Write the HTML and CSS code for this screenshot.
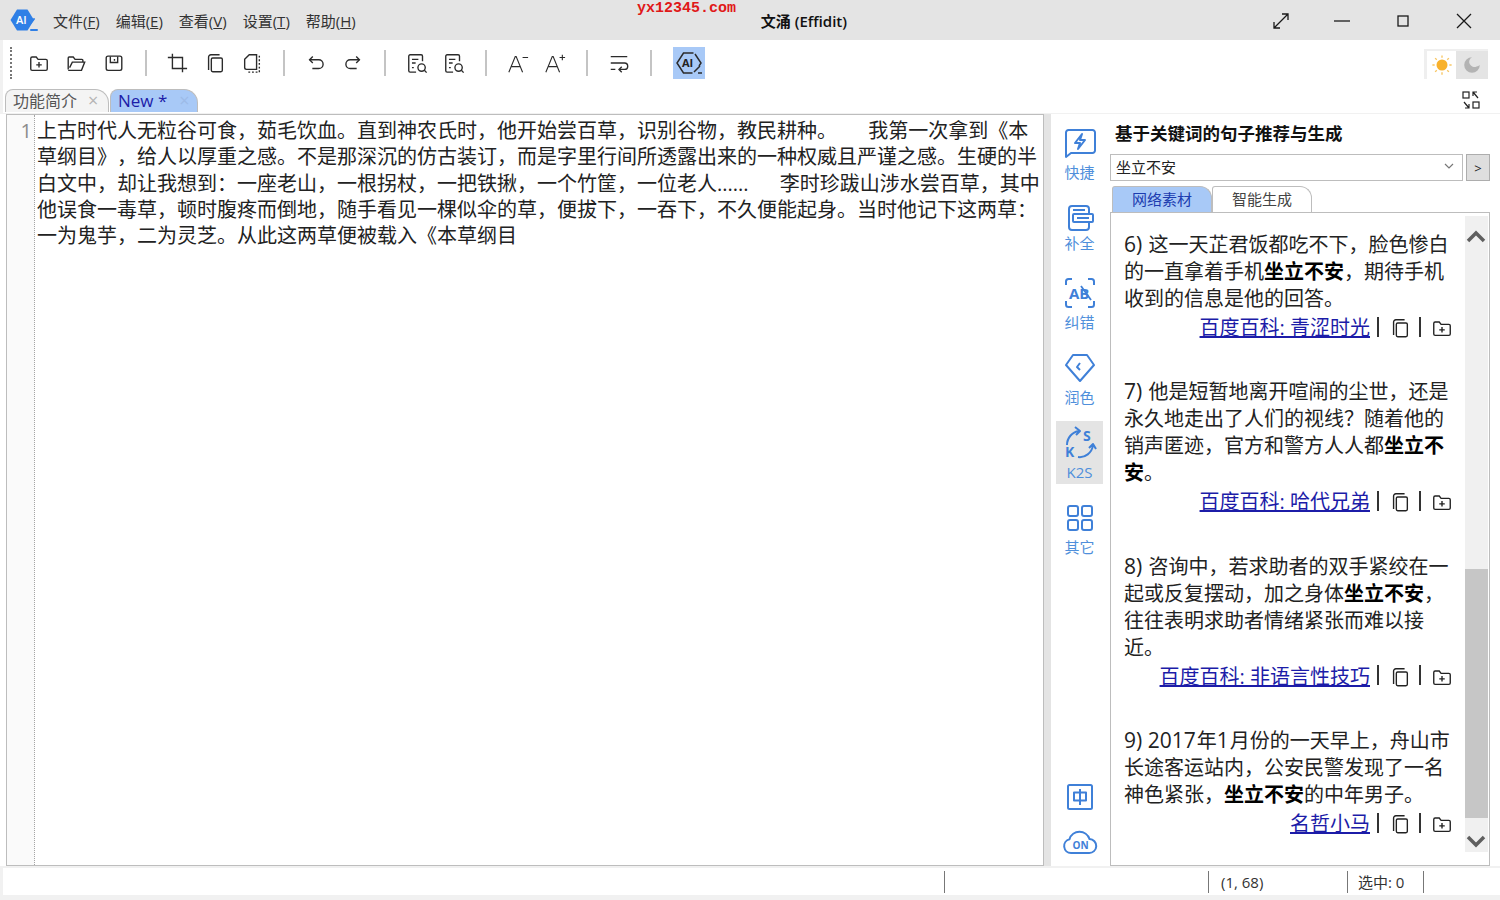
FILE: index.html
```html
<!DOCTYPE html>
<html lang="zh-CN">
<head>
  <meta charset="UTF-8">
  <title>文涌 (Effidit)</title>
  <link rel="stylesheet" href="styles.css">
</head>
<body>
  <svg class="defs" width="0" height="0">
    <symbol id="i-copy" viewBox="0 0 24 24"><path d="M5 19.5V5.5A2.5 2.5 0 0 1 7.500 3H17"/><rect x="8" y="6.500" width="12" height="15" rx="1.500"/></symbol>
    <symbol id="i-folder" viewBox="0 0 24 24"><path d="M3 7a1.500 1.500 0 0 1 1.500-1.500H9l2 2.500h8.500A1.500 1.500 0 0 1 21 9.500v9a1.500 1.500 0 0 1-1.500 1.500h-15A1.500 1.500 0 0 1 3 18.500z"/><path d="M12 11v6M9 14h6"/></symbol>
    <symbol id="i-docsearch" viewBox="0 0 24 24"><path d="M18 10V4.500A1.500 1.500 0 0 0 16.500 3h-12A1.500 1.500 0 0 0 3 4.500v16A1.500 1.500 0 0 0 4.500 22H11"/><path d="M6.500 8h7M6.500 12h4M6.500 17h2"/><circle cx="17" cy="17" r="4"/><path d="m20 20 2.500 2.500"/></symbol>
  </svg>

  <div class="app">
    <header class="titlebar">
      <svg class="logo" viewBox="0 0 28 24">
        <path class="logo-hex" d="M7 1.500h10.500L24 12l-6.500 10.500H7L.5 12z"/>
        <text class="logo-text" x="6" y="16">AI</text>
        <path class="logo-slash" d="M16 21 24 11M21 22h6"/>
      </svg>
      <nav class="menu">
        <span>文件(<u>F</u>)</span>
        <span>编辑(<u>E</u>)</span>
        <span>查看(<u>V</u>)</span>
        <span>设置(<u>T</u>)</span>
        <span>帮助(<u>H</u>)</span>
      </nav>
      <div class="app-title">文涌 (Effidit)</div>
      <div class="win-controls">
        <svg class="win-btn" viewBox="0 0 20 20"><path d="M3 17 17 3M11 3h6v6M3 11v6h6"/></svg>
        <svg class="win-btn" viewBox="0 0 20 20"><path d="M2 10h16"/></svg>
        <svg class="win-btn" viewBox="0 0 20 20"><rect x="5" y="5" width="10" height="10"/></svg>
        <svg class="win-btn" viewBox="0 0 20 20"><path d="m3 3 14 14M17 3 3 17"/></svg>
      </div>
      <div class="watermark">yx12345.com</div>
    </header>

    <div class="toolbar">
      <div class="grip"></div>
      <button class="tool"><svg viewBox="0 0 24 24"><use href="#i-folder"/></svg></button>
      <button class="tool"><svg viewBox="0 0 24 24"><path d="M3.500 19V6.500a1 1 0 0 1 1-1H9l2 2.500h7.500a1 1 0 0 1 1 1V11"/><path d="M3.500 20h14.500l3.500-9H8L5 17"/></svg></button>
      <button class="tool"><svg viewBox="0 0 24 24"><rect x="3.500" y="4.500" width="17" height="15.500" rx="2"/><path d="M8 5v6.500h8V5M12.500 7.500v2"/></svg></button>
      <span class="sep"></span>
      <button class="tool"><svg viewBox="0 0 24 24"><path d="M7 2v16h16"/><path d="M2 6h16v16"/></svg></button>
      <button class="tool"><svg viewBox="0 0 24 24"><use href="#i-copy"/></svg></button>
      <button class="tool"><svg viewBox="0 0 24 24"><path d="M17 19H6a2 2 0 0 1-2-2V8l5-5h8z"/><path class="dash" d="M20 4v18H8"/></svg></button>
      <span class="sep"></span>
      <button class="tool"><svg viewBox="0 0 24 24"><path d="M5 8.500h10a4.700 4.700 0 0 1 0 9.500H8"/><path d="M8.500 5 5 8.500 8.500 12"/></svg></button>
      <button class="tool"><svg viewBox="0 0 24 24"><path d="M19 8.500H9a4.700 4.700 0 0 0 0 9.500h7"/><path d="M15.500 5 19 8.500 15.500 12"/></svg></button>
      <span class="sep"></span>
      <button class="tool"><svg viewBox="0 0 24 24"><use href="#i-docsearch"/></svg></button>
      <button class="tool"><svg viewBox="0 0 24 24"><use href="#i-docsearch"/></svg></button>
      <span class="sep"></span>
      <button class="tool"><svg class="thin" viewBox="0 0 24 24"><path d="m2 22 7-17h1l7 17M5 16h10M17 6h6"/></svg></button>
      <button class="tool"><svg class="thin" viewBox="0 0 24 24"><path d="m2 22 7-17h1l7 17M5 16h10M17 6h6M20 3v6"/></svg></button>
      <span class="sep"></span>
      <button class="tool"><svg viewBox="0 0 24 24"><path d="M3 5h18M3 12h15a3.500 3.500 0 0 1 0 7h-5M3 19h5"/><path d="m15 16-3 3 3 3"/></svg></button>
      <span class="sep"></span>
      <button class="tool tool-on">
        <svg viewBox="0 0 28 24">
          <path d="M18.500 2H8.500L2 12l6.500 10h9M20 3l6 9-2 3"/>
          <text class="ai-text" x="7" y="16">AI</text>
          <path d="m19 21 6-6M23 22h4"/>
        </svg>
      </button>
      <div class="theme-switch">
        <span class="theme-sun">
          <svg viewBox="0 0 24 24">
            <circle class="sun-core" cx="12" cy="12" r="6"/>
            <path class="sun-rays" d="M12 1.500v2.500M12 20v2.500M1.500 12H4M20 12h2.500M4.500 4.500l1.800 1.800M17.700 17.700l1.800 1.800M4.500 19.500l1.800-1.800M17.700 6.300l1.800-1.800"/>
          </svg>
        </span>
        <span class="theme-moon">
          <svg viewBox="0 0 24 24"><path class="moon" d="M12 3.500a8.500 8.500 0 1 0 8.500 8.500 6 6 0 0 1-3.500 1.500A5.500 5.500 0 0 1 12 3.500z"/></svg>
        </span>
      </div>
    </div>

    <div class="tabrow">
      <div class="tabs">
        <div class="tab">功能简介<span class="tab-x">×</span></div>
        <div class="tab tab-on">New *<span class="tab-x">×</span></div>
      </div>
      <svg class="swap" viewBox="0 0 20 20">
        <rect x="2" y="2" width="6" height="6"/><rect x="12" y="12" width="6" height="6"/>
        <path d="m17 8-5-6M12 6V2h4M3 12l5 6M8 14v4H4"/>
      </svg>
    </div>

    <main class="main">
      <section class="editor">
        <div class="gutter">1</div>
        <div class="editor-text">上古时代人无粒谷可食，茹毛饮血。直到神农氏时，他开始尝百草，识别谷物，教民耕种。      我第一次拿到《本<br>草纲目》，给人以厚重之感。不是那深沉的仿古装订，而是字里行间所透露出来的一种权威且严谨之感。生硬的半<br>白文中，却让我想到：一座老山，一根拐杖，一把铁揪，一个竹筐，一位老人......      李时珍跋山涉水尝百草，其中<br>他误食一毒草，顿时腹疼而倒地，随手看见一棵似伞的草，便拔下，一吞下，不久便能起身。当时他记下这两草：<br>一为鬼芋，二为灵芝。从此这两草便被载入《本草纲目</div>
      </section>
      <div class="splitter"></div>

      <aside class="rail">
        <div class="rail-item">
          <svg class="rail-icon" viewBox="0 0 32 32"><path d="M2 5.500A2.500 2.500 0 0 1 4.500 3h24A2.500 2.500 0 0 1 31 5.500v18a2.500 2.500 0 0 1-2.500 2.500H7l-5 4z"/><path d="M18 7 11 16h5l-2 6 7-9h-5z"/></svg>
          <span class="rail-label">快捷</span>
        </div>
        <div class="rail-item rail-tight">
          <svg class="rail-icon" viewBox="0 0 32 32"><path d="M25 12V7a3 3 0 0 0-3-3H8a3 3 0 0 0-3 3v18a3 3 0 0 0 3 3h14a3 3 0 0 0 3-3v-5"/><rect x="9" y="12" width="20" height="8" rx="1"/><path d="M9 8h12M13 16h12"/></svg>
          <span class="rail-label">补全</span>
        </div>
        <div class="rail-item">
          <svg class="rail-icon" viewBox="0 0 32 32">
            <path d="M2 8V4.500A2.500 2.500 0 0 1 4.500 2H8M24 2h3.500A2.500 2.500 0 0 1 30 4.500V8M2 24v3.500A2.500 2.500 0 0 0 4.500 30H8M24 30h3.500a2.500 2.500 0 0 0 2.500-2.500V24"/>
            <text class="fix-text" x="5" y="22">AB</text>
            <path class="fix-slash" d="m17 9 10 14"/>
          </svg>
          <span class="rail-label">纠错</span>
        </div>
        <div class="rail-item">
          <svg class="rail-icon" viewBox="0 0 32 32"><path d="M9 3h14l7 10-14 16L2 13z"/><path d="m16 11-3 4 3 3"/></svg>
          <span class="rail-label">润色</span>
        </div>
        <div class="rail-item rail-on">
          <svg class="rail-icon" viewBox="0 0 32 32">
            <path d="M3 18C3 11 8 5 15 4M11 0l5 4-4 4M14 30c7 1 14-4 15-12M25 21l4-4 3 5"/>
            <text class="k2s-text" x="19" y="14">S</text>
            <text class="k2s-text" x="1" y="30">K</text>
          </svg>
          <span class="rail-label">K2S</span>
        </div>
        <div class="rail-item">
          <svg class="rail-icon" viewBox="0 0 32 32"><rect x="4" y="4" width="10" height="10" rx="2"/><rect x="18" y="4" width="10" height="10" rx="2"/><rect x="4" y="18" width="10" height="10" rx="2"/><rect x="18" y="18" width="10" height="10" rx="2"/></svg>
          <span class="rail-label">其它</span>
        </div>
        <div class="rail-bottom">
          <svg class="rail-icon" viewBox="0 0 32 32"><rect x="4" y="4" width="24" height="24" rx="1.500"/><rect x="10" y="11.500" width="12" height="8"/><path d="M16 8v16"/></svg>
          <svg class="rail-cloud" viewBox="0 0 36 28"><path d="M9 25a7 7 0 0 1-1.500-13.800A10.500 10.500 0 0 1 27.500 11 7 7 0 0 1 27 25z"/><text class="on-text" x="10.500" y="20.500">ON</text></svg>
        </div>
      </aside>

      <section class="panel">
        <h2 class="panel-title">基于关键词的句子推荐与生成</h2>
        <div class="combo-row">
          <div class="combo">
            <span>坐立不安</span>
            <svg class="combo-arrow" viewBox="0 0 10 6"><path d="m1 1 4 4 4-4"/></svg>
          </div>
          <div class="go-btn">&gt;</div>
        </div>
        <div class="panel-tabs">
          <div class="ptab ptab-on">网络素材</div>
          <div class="ptab">智能生成</div>
        </div>
        <div class="results">
          <div class="result-list">
            <article class="entry">
              <p><span class="num">6)</span> 这一天芷君饭都吃不下，脸色惨白<br>的一直拿着手机<b>坐立不安</b>，期待手机<br>收到的信息是他的回答。</p>
              <div class="source"><a>百度百科: 青涩时光</a><i class="bar"></i><svg viewBox="0 0 24 24"><use href="#i-copy"/></svg><i class="bar"></i><svg viewBox="0 0 24 24"><use href="#i-folder"/></svg></div>
            </article>
            <article class="entry">
              <p><span class="num">7)</span> 他是短暂地离开喧闹的尘世，还是<br>永久地走出了人们的视线？随着他的<br>销声匿迹，官方和警方人人都<b>坐立不<br>安</b>。</p>
              <div class="source"><a>百度百科: 哈代兄弟</a><i class="bar"></i><svg viewBox="0 0 24 24"><use href="#i-copy"/></svg><i class="bar"></i><svg viewBox="0 0 24 24"><use href="#i-folder"/></svg></div>
            </article>
            <article class="entry">
              <p><span class="num">8)</span> 咨询中，若求助者的双手紧绞在一<br>起或反复摆动，加之身体<b>坐立不安</b>，<br>往往表明求助者情绪紧张而难以接<br>近。</p>
              <div class="source"><a>百度百科: 非语言性技巧</a><i class="bar"></i><svg viewBox="0 0 24 24"><use href="#i-copy"/></svg><i class="bar"></i><svg viewBox="0 0 24 24"><use href="#i-folder"/></svg></div>
            </article>
            <article class="entry">
              <p><span class="num">9) 2017</span>年<span class="num">1</span>月份的一天早上，舟山市<br>长途客运站内，公安民警发现了一名<br>神色紧张，<b>坐立不安</b>的中年男子。</p>
              <div class="source"><a>名哲小马</a><i class="bar"></i><svg viewBox="0 0 24 24"><use href="#i-copy"/></svg><i class="bar"></i><svg viewBox="0 0 24 24"><use href="#i-folder"/></svg></div>
            </article>
          </div>
          <div class="scrollbar">
            <svg class="scroll-arrow" viewBox="0 0 20 14"><path d="m2 11 8-8 8 8"/></svg>
            <div class="scroll-thumb"></div>
            <svg class="scroll-arrow" viewBox="0 0 20 14"><path d="m2 3 8 8 8-8"/></svg>
          </div>
        </div>
      </section>
    </main>

    <footer class="statusbar">
      <span class="status-cell status-a"></span>
      <span class="status-cell status-b"></span>
      <span class="status-cell status-c">(1, 68)</span>
      <span class="status-cell status-d">选中: 0</span>
      <span class="status-cell"></span>
    </footer>
  </div>
</body>
</html>
```

FILE: styles.css
```css
:root {
  --rail-blue: #3f80d8;
  --tab-blue: #a8c9f7;
  --link-blue: #1c1ca8;
  --bar-grey: #e4e4e4;
  --line-grey: #bdbdbd;
  --ink: #222222;
}

* {
  box-sizing: border-box;
  font-family: "Open Sans", "Noto Sans CJK SC", sans-serif;
  text-spacing-trim: space-all;
}

html, body {
  margin: 0;
  height: 100%;
  overflow: hidden;
  background: #f1f1f1;
}

.defs {
  position: absolute;
}

.app {
  height: 900px;
  display: flex;
  flex-direction: column;
  color: var(--ink);
}

/* title bar */
.titlebar {
  position: relative;
  height: 40px;
  flex: none;
  display: flex;
  align-items: center;
  background: var(--bar-grey);
  padding-left: 10px;
}

.logo {
  width: 28px;
  height: 24px;
}

.logo-hex {
  fill: #2f7fe6;
}

.logo-text {
  font-size: 11px;
  font-weight: 600;
  fill: #ffffff;
}

.logo-slash {
  fill: none;
  stroke: #2f7fe6;
  stroke-width: 2;
  stroke-linecap: round;
}

.menu {
  display: flex;
  gap: 16px;
  margin-left: 15px;
  font-size: 15px;
  color: #333333;
}

.app-title {
  margin-left: 405px;
  font-size: 15px;
  font-weight: 600;
  color: #111111;
}

.win-controls {
  margin-left: auto;
  margin-top: 2px;
  display: flex;
  gap: 41px;
  padding-right: 26px;
}

.win-btn {
  width: 20px;
  height: 20px;
  fill: none;
  stroke: #1a1a1a;
  stroke-width: 1.300;
}

.watermark {
  position: absolute;
  left: 637px;
  top: 1px;
  font-family: "Liberation Mono", monospace;
  font-size: 15px;
  font-weight: 700;
  line-height: 16px;
  color: #e01818;
}

/* toolbar */
.toolbar {
  height: 46px;
  flex: none;
  margin-left: 3px;
  display: flex;
  align-items: center;
  background: #ffffff;
  padding: 0 12px 0 7px;
}

.grip {
  width: 2px;
  height: 32px;
  margin-right: 8px;
  border-left: 2px dotted #777777;
}

.tool {
  width: 37.500px;
  height: 32px;
  padding: 0;
  border: none;
  background: none;
  display: flex;
  align-items: center;
  justify-content: center;
}

.tool svg {
  width: 22px;
  height: 22px;
  fill: none;
  stroke: #2b2b2b;
  stroke-width: 1.500;
}

.tool svg.thin {
  stroke-width: 1.200;
}

.sep {
  width: 2px;
  height: 26px;
  margin: 0 12px;
  background: #c4c4c4;
}

.dash {
  stroke-dasharray: 2 2;
}

.tool-on {
  width: 32px;
  margin-left: 9px;
  background: var(--tab-blue);
}

.tool-on svg {
  width: 28px;
  height: 24px;
}

.ai-text {
  font-size: 11px;
  font-weight: 700;
  fill: #222222;
  stroke: none;
}

.theme-switch {
  margin-left: auto;
  margin-top: 2px;
  display: flex;
  height: 30px;
  padding: 2px 0 0 3px;
  background: #efefef;
}

.theme-sun, .theme-moon {
  width: 32px;
  display: flex;
  align-items: center;
  justify-content: center;
}

.theme-sun {
  width: 29px;
  background: #ffffff;
}

.theme-moon {
  background: var(--bar-grey);
}

.theme-switch svg {
  width: 22px;
  height: 22px;
}

.sun-core {
  fill: #f8b12c;
}

.sun-rays {
  fill: none;
  stroke: #f8c765;
  stroke-width: 1.500;
}

.moon {
  fill: #b3b3b3;
}

/* document tabs */
.tabrow {
  height: 27px;
  flex: none;
  margin-left: 3px;
  display: flex;
  align-items: flex-end;
  justify-content: space-between;
  padding: 0 19px 1px 2px;
  background: #ffffff;
}

.tabs {
  display: flex;
}

.tab {
  width: 104px;
  height: 23px;
  padding: 0 0 2px 7px;
  display: flex;
  align-items: center;
  font-size: 16px;
  color: #555555;
  background: #f4f4f4;
  border: 1px solid var(--line-grey);
  border-bottom: none;
  border-radius: 8px 14px 0 0;
}

.tab-x {
  margin-left: 11px;
  font-size: 18px;
  line-height: 18px;
  color: #b5b5b5;
}

.tab-on {
  width: 88px;
  margin-left: 1px;
  font-size: 17px;
  color: #1c1ca8;
  background: var(--tab-blue);
}

.tab-on .tab-x {
  margin-left: 12px;
  color: #9dbbe8;
}

.swap {
  width: 20px;
  height: 20px;
  margin-bottom: 2px;
  fill: none;
  stroke: #222222;
  stroke-width: 1.200;
}

/* main area */
.main {
  height: 752px;
  flex: none;
  margin-top: 1px;
  display: flex;
  background: #ffffff;
}

.editor {
  width: 1038px;
  margin-left: 6px;
  display: flex;
  border: 1px solid var(--line-grey);
  background: #ffffff;
}

.gutter {
  width: 28px;
  flex: none;
  padding: 3px 2px 0 0;
  text-align: right;
  font-size: 20px;
  line-height: 26.250px;
  color: #8c8c8c;
  background: #fafafa;
  border-right: 1px dotted #a5a5a5;
}

.editor-text {
  padding: 3px 0 0 2px;
  font-size: 20px;
  line-height: 26.250px;
  white-space: pre;
  color: var(--ink);
}

.splitter {
  width: 7px;
  flex: none;
  background: var(--bar-grey);
}

.rail {
  width: 47px;
  flex: none;
  margin-left: 5px;
  padding-top: 7px;
  display: flex;
  flex-direction: column;
  gap: 12px;
  align-items: center;
}

.rail-item {
  width: 100%;
  height: 63px;
  flex: none;
  padding-top: 6px;
  display: flex;
  flex-direction: column;
  align-items: center;
}

.rail-on {
  background: var(--bar-grey);
}

.rail-icon {
  width: 32px;
  height: 32px;
  flex: none;
  overflow: visible;
  fill: none;
  stroke: var(--rail-blue);
  stroke-width: 2;
  stroke-linejoin: round;
}

.rail-label {
  margin-top: 2px;
  font-size: 15px;
  line-height: 22px;
  color: #4f8fdb;
}

.rail-tight .rail-label {
  margin-top: -2px;
}

.fix-text {
  font-size: 15px;
  font-weight: 700;
  fill: var(--rail-blue);
  stroke: none;
}

.fix-slash {
  stroke-width: 1.800;
}

.k2s-text {
  font-size: 14px;
  font-weight: 700;
  fill: var(--rail-blue);
  stroke: none;
}

.rail-bottom {
  margin-top: auto;
  padding-bottom: 10px;
  display: flex;
  flex-direction: column;
  align-items: center;
  gap: 15px;
}

.rail-cloud {
  width: 36px;
  height: 28px;
  fill: none;
  stroke: var(--rail-blue);
  stroke-width: 2;
}

.on-text {
  font-size: 10px;
  font-weight: 700;
  fill: var(--rail-blue);
  stroke: none;
}

/* right panel */
.panel {
  width: 380px;
  flex: none;
  margin-left: 7px;
  display: flex;
  flex-direction: column;
}

.panel-title {
  height: 40px;
  flex: none;
  margin: 0;
  padding-left: 5px;
  font-size: 17.500px;
  font-weight: 700;
  line-height: 38px;
  color: #111111;
}

.combo-row {
  height: 27px;
  flex: none;
  display: flex;
  gap: 3px;
}

.combo {
  flex: 1;
  padding: 0 8px 3px 5px;
  display: flex;
  align-items: center;
  justify-content: space-between;
  font-size: 15px;
  border: 1px solid var(--line-grey);
}

.combo-arrow {
  width: 10px;
  height: 6px;
  fill: none;
  stroke: #777777;
  stroke-width: 1.200;
}

.go-btn {
  width: 24px;
  display: flex;
  align-items: center;
  justify-content: center;
  font-size: 13px;
  background: #dedede;
  border: 1px solid #adadad;
}

.panel-tabs {
  height: 26px;
  flex: none;
  margin-top: 5px;
  padding-left: 2px;
  display: flex;
}

.ptab {
  width: 100px;
  padding-bottom: 3px;
  display: flex;
  align-items: center;
  justify-content: center;
  font-size: 15px;
  color: #444444;
  border: 1px solid var(--line-grey);
  border-bottom: none;
  border-radius: 3px 12px 0 0;
}

.ptab-on {
  color: #1c3cb0;
  background: var(--tab-blue);
}

.results {
  flex: 1;
  min-height: 0;
  display: flex;
  justify-content: space-between;
  padding: 3px 1px 13px 13px;
  border: 1px solid var(--line-grey);
}

.result-list {
  width: 329px;
  padding-top: 15px;
  overflow: hidden;
}

.entry {
  margin-bottom: 37.400px;
}

.entry p {
  margin: 0;
  font-size: 20px;
  line-height: 27px;
  white-space: nowrap;
  color: var(--ink);
}

.entry .num {
  margin-right: 1px;
  font-size: 21px;
  line-height: 20px;
}

.entry b {
  font-weight: 700;
  color: #000000;
}

.source {
  height: 29px;
  display: flex;
  align-items: center;
  justify-content: flex-end;
  font-size: 20px;
}

.source a {
  color: var(--link-blue);
  text-decoration: underline;
}

.source svg {
  width: 22px;
  height: 22px;
  margin-top: 3px;
  fill: none;
  stroke: #222222;
  stroke-width: 1.500;
}

.bar {
  width: 2px;
  height: 20px;
  margin: 0 10px 0 7px;
  background: #333333;
}

.source svg + .bar {
  margin-left: 8px;
}

.scrollbar {
  width: 23px;
  display: flex;
  flex-direction: column;
  align-items: center;
  background: #f0f0f0;
}

.scroll-arrow {
  width: 20px;
  height: 14px;
  flex: none;
  margin-right: 2px;
  fill: none;
  stroke: #5f5f5f;
  stroke-width: 3.500;
}

.scroll-arrow:first-child {
  margin-top: 14px;
}

.scroll-thumb {
  width: 100%;
  height: 249px;
  flex: none;
  margin-top: 325px;
  margin-bottom: 16px;
  background: #c6c6c6;
}

/* status bar */
.statusbar {
  height: 27px;
  flex: none;
  margin: 2px 0 0 3px;
  padding-top: 1px;
  display: flex;
  align-items: center;
  font-size: 15px;
  color: #333333;
  background: #ffffff;
}

.status-cell {
  height: 22px;
  padding-left: 10px;
  line-height: 22px;
  border-right: 1px solid #777777;
}

.status-a {
  width: 942px;
}

.status-b {
  width: 264px;
}

.status-c {
  width: 139px;
  padding-left: 12px;
}

.status-d {
  width: 76px;
}

.status-cell:last-child {
  border-right: none;
}
```
